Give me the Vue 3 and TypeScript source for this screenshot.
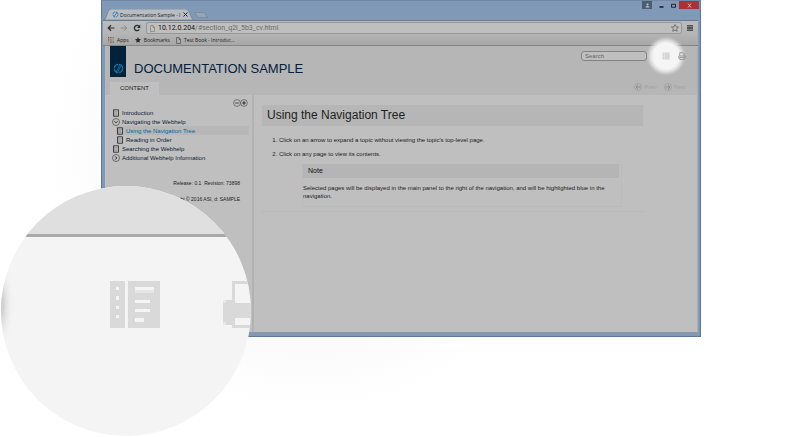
<script setup lang="ts">
interface TreeItem {
  label: string
  kind: 'page' | 'open' | 'closed'
  nested?: boolean
  active?: boolean
}

const tree: TreeItem[] = [
  { label: 'Introduction', kind: 'page' },
  { label: 'Navigating the Webhelp', kind: 'open' },
  { label: 'Using the Navigation Tree', kind: 'page', nested: true, active: true },
  { label: 'Reading in Order', kind: 'page', nested: true },
  { label: 'Searching the Webhelp', kind: 'page' },
  { label: 'Additional Webhelp Information', kind: 'closed' },
]

const appColours = ['#b5382f', '#b5382f', '#3d8a4c', '#3f6fae', '#3d8a4c', '#b58a2c', '#b58a2c', '#b5382f', '#3f6fae']
</script>

<template>
  <div class="stage">
    <section class="window">
      <header class="titlebar">
        <div class="tabs">
          <div class="tab">
            <svg class="tab-shape" viewBox="0 0 90 11" preserveAspectRatio="none" aria-hidden="true">
              <path d="M0 11C3 10 3 0 7 0H82C86 0 86 10 90 11Z" fill="#b9bcc0" stroke="#66788f" stroke-width=".6" />
            </svg>
            <svg class="tab-logo" viewBox="0 0 12 12" aria-hidden="true">
              <circle cx="6" cy="6" r="4.4" fill="none" stroke="#1583bb" stroke-width="1.6" stroke-dasharray="5.5 1.4" />
              <path d="M3.6 9.4 8.4 2.6" stroke="#1583bb" stroke-width="1.5" />
            </svg>
            <span class="tab-title">Documentation Sample - I</span>
            <button class="plain" aria-label="Close tab">
              <svg class="i5" viewBox="0 0 10 10"><path d="m1 1 8 8M9 1 1 9" stroke="#25282c" stroke-width="2" /></svg>
            </button>
          </div>
          <button class="plain newtab" aria-label="New tab">
            <svg viewBox="0 0 14 6"><path d="M.5.5H10L13.5 5.5H4Z" fill="#9aa5b4" stroke="#6f8098" stroke-width=".6" /></svg>
          </button>
        </div>
        <div class="controls">
          <button class="user" aria-label="User">
            <svg class="i5" viewBox="0 0 10 10"><circle cx="5" cy="3" r="2.2" fill="#b8c0ca" /><path d="M1 9C1 5 9 5 9 9Z" fill="#b8c0ca" /></svg>
          </button>
          <button aria-label="Minimize"><svg class="i5" viewBox="0 0 10 10"><path d="M1 8H9" stroke="#14181d" stroke-width="3" /></svg></button>
          <button aria-label="Maximize"><svg class="i5" viewBox="0 0 10 10"><path d="M1 2.5H9V8.5H1Z" fill="none" stroke="#14181d" stroke-width="1.8" /></svg></button>
          <button class="close" aria-label="Close"><svg class="i5" viewBox="0 0 10 10"><path d="m2 1 6 8M8 1 2 9" stroke="#d0c0c0" stroke-width="1.8" /></svg></button>
        </div>
      </header>

      <div class="viewport">
        <div class="toolbar">
          <button class="plain" aria-label="Back"><svg class="i8" viewBox="0 0 16 16"><path d="M15 8H3M8 2.5 2.5 8 8 13.5" fill="none" stroke="#2c2c2c" stroke-width="2.4" /></svg></button>
          <button class="plain" aria-label="Forward"><svg class="i8" viewBox="0 0 16 16"><path d="M1 8H13M8 2.5 13.5 8 8 13.5" fill="none" stroke="#8c8c8c" stroke-width="2" /></svg></button>
          <button class="plain" aria-label="Reload"><svg class="i8" viewBox="0 0 16 16"><path d="M12.5 11A5.3 5.3 0 1 1 12 4.5" fill="none" stroke="#2c2c2c" stroke-width="2.6" /><path d="M14.5 1V8H8Z" fill="#2c2c2c" /></svg></button>
          <div class="address">
            <svg class="doc" viewBox="0 0 10 14" aria-hidden="true"><path d="M1 1H6L9 4.500V13H1ZM6 1V5H9" fill="none" stroke="#777" stroke-width="1.200" /></svg>
            <span class="url"><b>10.12.0.204</b>/#section_q2l_5b3_cv.html</span>
            <button class="plain star" aria-label="Bookmark this page"><svg class="i8" viewBox="0 0 16 16"><path d="m8 1 2.100 4.700 5 .5-3.800 3.400 1.100 5L8 12l-4.400 2.600 1.100-5L.9 6.200l5-.5Z" fill="none" stroke="#444" stroke-width="1.200" /></svg></button>
          </div>
          <button class="plain" aria-label="Menu"><svg class="i6" viewBox="0 0 12 12"><path d="M0 1.500H12M0 4.500H12M0 7.500H12M0 10.500H12" stroke="#2c2c2c" stroke-width="1.900" /></svg></button>
        </div>

        <nav class="bookmarks" aria-label="Bookmarks">
          <a href="#">
            <svg class="i6" viewBox="0 0 12 12"><rect v-for="(c, i) in appColours" :key="i" :x="(i % 3) * 4.5" :y="Math.floor(i / 3) * 4.5" width="2.600" height="2.600" :fill="c" /></svg>
            Apps
          </a>
          <a href="#">
            <svg class="i6" viewBox="0 0 16 16"><path d="m8 0 2.300 5.400 5.700.5-4.300 3.800 1.300 5.900L8 12.500l-5 3.100 1.300-5.900L0 5.900l5.700-.5Z" fill="#2a2a2a" /></svg>
            Bookmarks
          </a>
          <a href="#">
            <svg class="doc" viewBox="0 0 10 14"><path d="M1 1H6L9 4.500V13H1ZM6 1V5H9" fill="none" stroke="#444" stroke-width="1.200" /></svg>
            Test Book - Introduc...
          </a>
        </nav>

        <header class="head">
          <div class="brand">
            <div class="logo">
              <svg viewBox="0 0 20 20" aria-hidden="true">
                <circle cx="10" cy="10" r="7.500" fill="none" stroke="#0c7ab2" stroke-width="2.200" stroke-dasharray="10 1.780" />
                <path d="M6 16.500 12.500 3.500M8.500 16.500 14 5.500" stroke="#0c7ab2" stroke-width="1.500" />
              </svg>
            </div>
            <h1>DOCUMENTATION SAMPLE</h1>
          </div>
          <div class="tools">
            <input type="text" placeholder="Search" aria-label="Search" />
            <button class="plain book" aria-label="Table of contents">
              <svg class="i8" viewBox="0 0 16 16"><path d="M1 1H5V15H1ZM6 1H15V15H6Z" fill="#d2d2d2" /><path d="M2.500 3H3.500M2.500 6H3.500M2.500 9H3.500M2.500 12H3.500M8 4H13M8 8H12M8 12H11" stroke="#f0f0f0" /></svg>
            </button>
            <button class="plain print" aria-label="Print">
              <svg class="i8" viewBox="0 0 16 16"><path d="M3.500 8V1.500H10L12.500 4V8M1.500 13V8H14.500V13M3.500 11H12.500V15H3.500Z" fill="none" stroke="#929292" stroke-width="1.700" /></svg>
            </button>
          </div>
          <div class="content-tab">CONTENT</div>
          <div class="pager">
            <a href="#"><svg class="i8" viewBox="0 0 16 16"><circle cx="8" cy="8" r="7" fill="none" stroke="#999" stroke-width="1.300" /><path d="M13 8H4M8 4 4 8 8 12" fill="none" stroke="#8e8e8e" stroke-width="2" /></svg>Prev</a>
            <a href="#"><svg class="i8" viewBox="0 0 16 16"><circle cx="8" cy="8" r="7" fill="none" stroke="#999" stroke-width="1.300" /><path d="M3 8H12M8 4 12 8 8 12" fill="none" stroke="#8e8e8e" stroke-width="2" /></svg>Next</a>
          </div>
        </header>

        <div class="body">
          <aside>
            <div class="expanders">
              <button class="plain" aria-label="Collapse all"><svg class="i8" viewBox="0 0 16 16"><circle cx="8" cy="8" r="6.800" fill="none" stroke="#444" stroke-width="1.200" /><path d="M4.500 8H11.500" stroke="#444" stroke-width="2" /></svg></button>
              <button class="plain" aria-label="Expand all"><svg class="i8" viewBox="0 0 16 16"><circle cx="8" cy="8" r="6.800" fill="none" stroke="#444" stroke-width="1.200" /><path d="M4.500 8H11.500M8 4.500V11.500" stroke="#333" stroke-width="2.400" /></svg></button>
            </div>
            <ul class="tree">
              <li v-for="item in tree" :key="item.label" :class="{ nested: item.nested, active: item.active }">
                <a href="#">
                  <svg v-if="item.kind === 'page'" class="i8" viewBox="0 0 16 16"><path d="M3 1.500H13V14.500H3Z" fill="none" stroke="#333" stroke-width="1.800" /><path d="M5.500 2V14M7 5H11M7 8H11M7 11H11" stroke="#777" stroke-width="1" /></svg>
                  <svg v-else class="i8" viewBox="0 0 16 16"><circle cx="8" cy="8" r="7" fill="none" stroke="#333" stroke-width="1.200" /><path :d="item.kind === 'open' ? 'M5 6.500 8 9.500 11 6.500' : 'M6.500 5 9.500 8 6.500 11'" fill="none" stroke="#222" stroke-width="2" /></svg>
                  <span>{{ item.label }}</span>
                </a>
              </li>
            </ul>
            <footer>
              <p>Release: 0.1&nbsp; Revision: 73898</p>
              <p>Copyright © 2016 ASI, d: SAMPLE</p>
            </footer>
          </aside>

          <main>
            <article>
              <h2>Using the Navigation Tree</h2>
              <ol>
                <li>Click on an arrow to expand a topic without viewing the topic's top-level page.</li>
                <li>Click on any page to view its contents.</li>
              </ol>
              <div class="note">
                <h3>Note</h3>
                <p>Selected pages will be displayed in the main panel to the right of the navigation, and will be highlighted blue in the navigation.</p>
              </div>
            </article>
          </main>
        </div>
      </div>
    </section>

    <svg class="lens" viewBox="0 0 250 250" aria-hidden="true">
      <defs>
        <clipPath id="lens-clip"><circle cx="125" cy="125" r="125" /></clipPath>
        <radialGradient id="lens-edge">
          <stop offset="0" stop-color="#b4b4b4" />
          <stop offset=".4" stop-color="#d8d8d8" />
          <stop offset="1" stop-color="#f4f4f4" stop-opacity="0" />
        </radialGradient>
      </defs>
      <g clip-path="url(#lens-clip)">
        <path d="M0 0H250V250H0Z" fill="#f4f4f4" />
        <path d="M0 0H250V48H0Z" fill="#dfdfdf" />
        <path d="M0 48H250V51H0Z" fill="#a9a9a9" />
        <ellipse cx="-3" cy="118" rx="16" ry="46" fill="url(#lens-edge)" />
        <path d="M109 95H124V142H109ZM127 95H159V142H127Z" fill="#d9d9d9" />
        <path d="M115 101h3v3h-3zM115 110h3v4h-3zM115 120h3v3h-3zM115 129h3v3h-3zM134 101h19v3h-19zM134 114h15v3h-15zM134 123h15v3h-15zM134 132h9v4h-9z" fill="#f4f4f4" />
        <path d="M134 104h19v3h-19z" fill="#e6e6e6" />
        <path d="M231 95H250V98H234V117H250V132H234V139H250V142H231V139H225V136H222V114H231Z" fill="#d9d9d9" />
        <path d="M222 114h3v3h-3zM222 136h3v3h-3z" fill="#e8e8e8" />
      </g>
    </svg>
  </div>
</template>

<style>
body {
  margin: 0;
  background: #fff;
}
</style>

<style scoped>
* {
  box-sizing: border-box;
}
h1, h2, h3, p, ul, ol {
  margin: 0;
  padding: 0;
  font-weight: 400;
}
svg {
  display: block;
  flex: none;
}
a {
  color: inherit;
  text-decoration: none;
}
button {
  padding: 0;
  border: 0;
  font: inherit;
}
.plain {
  background: none;
  display: flex;
}
.i5 { width: 5px; height: 5px; }
.i6 { width: 6px; height: 6px; }
.i8 { width: 8px; height: 8px; }
.doc { width: 5px; height: 7px; }

.stage {
  position: relative;
  min-height: 100vh;
  padding: 0 100px 100px 101px;
  overflow: hidden;
  font-family: "Liberation Sans", Arial, sans-serif;
  font-size: 6px;
  line-height: 8px;
  color: #222;
  background: radial-gradient(circle 260px at 310px 150px, #f8f8f8 60%, #fff 100%);
}
.window {
  display: flex;
  flex-direction: column;
  min-height: calc(100vh - 100px);
  padding: 0 2px 3px 3px;
  background: #7f99b7;
  border: 1px solid #5d7896;
  border-top-color: #7189a5;
}
.titlebar {
  display: flex;
  justify-content: space-between;
  height: 19px;
  margin: 0 -1px 0 -2px;
}
.tabs {
  display: flex;
  align-items: flex-end;
  padding-left: 1px;
}
.tab {
  position: relative;
  display: flex;
  align-items: center;
  gap: 1px;
  width: 90px;
  height: 11px;
  padding: 0 6px 0 8px;
  font-family: "Open Sans", "Noto Sans", sans-serif;
  font-size: 5px;
  color: #222;
}
.tab > * {
  position: relative;
}
.tab > .tab-shape {
  position: absolute;
  inset: 0;
  width: 100%;
  height: 100%;
}
.tab-logo { width: 7px; height: 7px; }
.tab-title {
  flex: 1;
  white-space: nowrap;
}
.newtab {
  padding-bottom: 2px;
}
.newtab svg {
  width: 14px;
  height: 6px;
}
.controls {
  display: flex;
  align-items: flex-start;
}
.controls button {
  display: flex;
  align-items: center;
  justify-content: center;
  width: 12px;
  height: 8px;
  background: none;
}
.controls .user {
  width: 10px;
  margin-right: 3px;
  background: #4b5d73;
}
.controls .close {
  width: 20px;
  background: #a83239;
}
.viewport {
  flex: 1;
  display: flex;
  flex-direction: column;
  border-bottom: 1px solid #8e979f;
  border-right: 1px solid #a9b0b6;
  background: #bfbfbf;
}
.toolbar {
  display: flex;
  align-items: center;
  gap: 5px;
  height: 15px;
  margin: 0 -1px 0 -2px;
  padding: 0 5px 0 4px;
  border-top: 1px solid #687b92;
  background: linear-gradient(#b9bbbd, #b4b4b4);
}
.address {
  flex: 1;
  display: flex;
  align-items: center;
  gap: 3px;
  height: 12px;
  padding: 0 2px 0 3px;
  border: 1px solid #969696;
  border-radius: 2px;
  background: #bfbfbf;
  font-family: Roboto, "Noto Sans", sans-serif;
  font-size: 7px;
  color: #6a6a6a;
}
.url {
  flex: 1;
}
.url b {
  font-weight: 400;
  color: #111;
}
.bookmarks {
  display: flex;
  align-items: center;
  gap: 6px;
  height: 11px;
  margin: 0 -1px 0 -2px;
  padding-left: 5px;
  border-bottom: 1px solid #858585;
  background: linear-gradient(#b3b3b3, #a7a7a7);
  font-family: "Open Sans", "Noto Sans", sans-serif;
  font-size: 5px;
}
.bookmarks a {
  display: flex;
  align-items: center;
  gap: 3px;
}
.head {
  display: grid;
  grid-template-columns: 1fr auto;
  grid-template-rows: 31px 18px;
  padding: 0 11px 0 5px;
  background: #b6b6b6;
}
.brand {
  display: flex;
  gap: 8px;
}
.logo {
  display: flex;
  align-items: flex-end;
  justify-content: center;
  width: 16px;
  padding-bottom: 3px;
  background: #02223a;
}
.logo svg {
  width: 11px;
  height: 11px;
}
h1 {
  padding-top: 15px;
  font-size: 13px;
  line-height: 16px;
  color: #04203c;
}
.tools {
  display: flex;
  align-items: center;
  gap: 8px;
  height: 19px;
}
.tools input {
  width: 66px;
  height: 10px;
  margin-right: 7px;
  padding: 0 3px;
  border: 1px solid #838383;
  border-radius: 3px;
  outline: 0;
  background: #bfbfbf;
  font: 6px "Liberation Sans", Arial, sans-serif;
  color: #333;
}
.tools input::placeholder {
  color: #666;
}
.book,
.print {
  position: relative;
}
.book::before {
  content: "";
  position: absolute;
  inset: -16px;
  border-radius: 50%;
  background: radial-gradient(circle closest-side, #f5f5f5 65%, rgba(245, 245, 245, 0.6) 80%, rgba(245, 245, 245, 0.15) 92%, rgba(245, 245, 245, 0) 100%);
}
.book svg {
  position: relative;
}
.content-tab {
  align-self: end;
  width: 49px;
  height: 13px;
  background: #bfbfbf;
  line-height: 13px;
  text-align: center;
}
.pager {
  display: flex;
  align-items: center;
  justify-content: flex-end;
  gap: 7px;
  height: 20px;
  color: #a2a2a2;
}
.pager a {
  display: flex;
  gap: 2px;
}
.body {
  flex: 1;
  display: flex;
}
aside {
  flex: none;
  width: 149px;
  padding: 4px 3px 0 7px;
  border-right: 2px solid #b2b2b2;
}
.expanders {
  display: flex;
  justify-content: flex-end;
}
.expanders button {
  margin-right: -1px;
}
.expanders button:last-child {
  margin-right: 1px;
}
.tree {
  margin-top: 1px;
  list-style: none;
  color: #0c1c33;
}
.tree a {
  display: flex;
  align-items: center;
  gap: 2px;
  height: 9px;
}
.tree .nested {
  margin-left: 4px;
}
.tree .active {
  background: #b7b7b7;
  color: #00689c;
}
footer {
  padding: 17px 9px 0 0;
  text-align: right;
  font-size: 5px;
}
footer p {
  margin-bottom: 8px;
}
main {
  flex: 1;
  min-width: 0;
  padding: 10px 54px 0 8px;
}
article {
  padding-bottom: 4px;
  border-bottom: 1px solid #b8b8b8;
}
h2 {
  padding: 0 5px;
  background: #b6b6b6;
  font-size: 12px;
  line-height: 21px;
}
ol {
  margin-top: 10px;
  padding-left: 17px;
}
ol li {
  margin-bottom: 6px;
}
.note {
  margin: 0 21px 0 40px;
  padding-right: 2px;
  border: 1px solid #bbb;
  border-top: 0;
}
h3 {
  padding: 0 5px;
  background: #b5b5b5;
  font-size: 7px;
  line-height: 14px;
  color: #111;
}
.note p {
  padding: 6px 0;
}
.lens {
  position: absolute;
  left: 1px;
  bottom: 1px;
  width: 250px;
  height: 250px;
}
</style>
